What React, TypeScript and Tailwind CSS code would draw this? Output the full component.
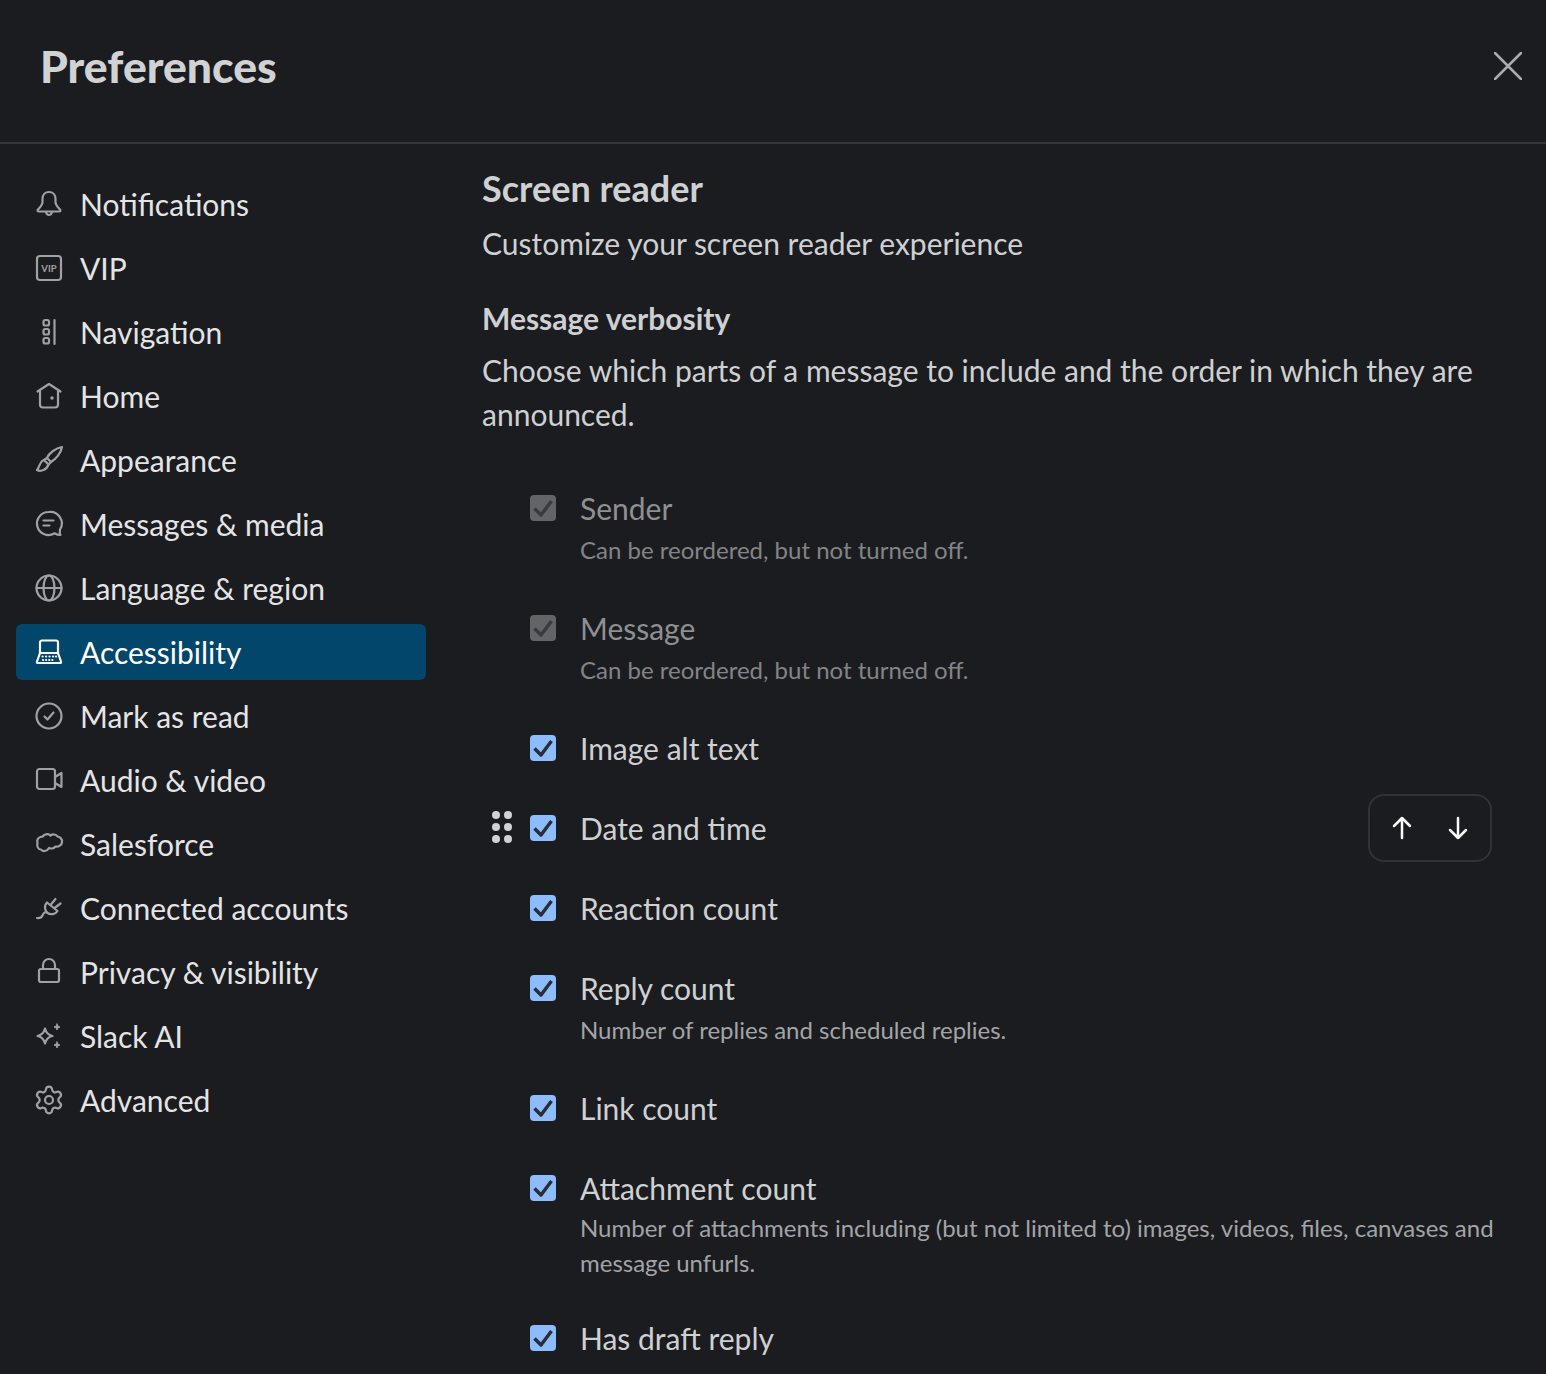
import { Settings } from "lucide-react";
import type { ReactNode } from "react";

const Ico = ({ children }: { children: ReactNode }) => (
  <svg
    width="26"
    height="26"
    viewBox="0 0 26 26"
    fill="none"
    stroke="currentColor"
    strokeWidth="2.2"
    strokeLinecap="round"
    strokeLinejoin="round"
    className="shrink-0 overflow-visible"
  >
    {children}
  </svg>
);

const navItems: { label: string; active?: boolean; icon: ReactNode }[] = [
  {
    label: "Notifications",
    icon: (
      <Ico>
        <path d="M13 1c-4 0-6.5 3-6.5 7v3c0 3-2 5-4.5 7.5-1 1-.5 2 1 2h20c1.500 0 2-1 1-2-2.500-2.500-4.500-4.500-4.500-7.500V8c0-4-2.500-7-6.500-7z" />
        <path d="M10 21c.5 2 1.500 3 3 3s2.500-1 3-3" />
      </Ico>
    ),
  },
  {
    label: "VIP",
    icon: (
      <Ico>
        <rect x="1" y="1" width="24" height="24" rx="3" />
        <text x="13" y="16.500" textAnchor="middle" fontSize="9.500" fontWeight="700" fill="currentColor" stroke="none">
          VIP
        </text>
      </Ico>
    ),
  },
  {
    label: "Navigation",
    icon: (
      <Ico>
        <rect x="7.500" y="1" width="5.500" height="5.500" rx="1.800" />
        <rect x="7.500" y="10" width="5.500" height="5.500" rx="1.800" />
        <rect x="7.500" y="19" width="5.500" height="5.500" rx="1.800" />
        <path d="M18.500 1v24" />
      </Ico>
    ),
  },
  {
    label: "Home",
    icon: (
      <Ico>
        <path d="M1.500 8.500 13 1l11.500 7.500M4 7v14.500A3 3 0 0 0 7 24.500h12a3 3 0 0 0 3-3V7" />
        <circle cx="16" cy="15" r="1.700" fill="currentColor" stroke="none" />
      </Ico>
    ),
  },
  {
    label: "Appearance",
    icon: (
      <Ico>
        <path d="M26 0C20 1 13 6 11 11l4 4C20 12 25 6 26 0z" />
        <path d="M11 11 8 13l4.500 4.500L15 15" />
        <path d="M8 13c-4 1-4 6-7 10 4 2 9.500 0 11.500-5.500" />
      </Ico>
    ),
  },
  {
    label: "Messages & media",
    icon: (
      <Ico>
        <path d="M12.500 1a11.500 11.500 0 1 0 6 21.300c1.500.9 3.500 1.700 6 1.700-1-1.500-.9-3.500-.5-5.500A11.500 11.500 0 0 0 12.500 1z" />
        <path d="M7.500 9.500h10M7.500 14.500h6" />
      </Ico>
    ),
  },
  {
    label: "Language & region",
    icon: (
      <Ico>
        <circle cx="13" cy="13" r="12.500" />
        <ellipse cx="13" cy="13" rx="5.500" ry="12.500" />
        <path d="M.5 13h25" />
      </Ico>
    ),
  },
  {
    label: "Accessibility",
    active: true,
    icon: (
      <Ico>
        <path d="M4 14V3.500A2 2 0 0 1 6 1.500h14a2 2 0 0 1 2 2V14" />
        <path d="M4 14h18l3 8.500a1 1 0 0 1-1 1.500H2a1 1 0 0 1-1-1.500z" />
        <path d="M6.500 17.500h.1M10 17.500h.1M13.500 17.500h.1M17 17.500h.1M20 17.500h.1M7 21h12" strokeDasharray="0.1 3" />
      </Ico>
    ),
  },
  {
    label: "Mark as read",
    icon: (
      <Ico>
        <circle cx="13" cy="13" r="12.500" />
        <path d="m8.500 13.500 3 3 6-7" />
      </Ico>
    ),
  },
  {
    label: "Audio & video",
    icon: (
      <Ico>
        <rect x="1" y="2" width="18" height="20" rx="2.500" />
        <path d="m19 10 6.500-4v14L19 16" />
      </Ico>
    ),
  },
  {
    label: "Salesforce",
    icon: (
      <Ico>
        <path d="M7 5C9 2.500 13 2.500 14.500 4.500c2-1.500 5.500-1.500 7 1C24.500 6 26.500 8.500 26 11c0 3-3.500 5-6.500 4.500-1.500 2-4.500 2.500-6.500 1.500-2 3.500-6.500 4-8 1.500-3 0-4.500-3.500-3.500-6.500-1-2.500.5-5.500 3-6 1-.5 2-.5 2.500-.5z" />
      </Ico>
    ),
  },
  {
    label: "Connected accounts",
    icon: (
      <Ico>
        <path d="M1 23c3 .5 4.500-.5 5.500-2.500.5-1.500 1-2.500 2.500-3" />
        <path d="M11 7.500 21.500 16c-2 3.500-7 4-10 2s-3.500-8-.5-10.500z" />
        <path d="m14.500 10 5-6M18.500 13l6-4.500" />
      </Ico>
    ),
  },
  {
    label: "Privacy & visibility",
    icon: (
      <Ico>
        <rect x="3" y="10" width="20" height="13" rx="2" />
        <path d="M7 10V6a6 6 0 0 1 12 0v4" />
      </Ico>
    ),
  },
  {
    label: "Slack AI",
    icon: (
      <Ico>
        <path d="M9 5.500c.9 3.700 3 6.600 7.500 7.500-4.500.9-6.600 3.800-7.500 7.500-.9-3.700-3-6.600-7.500-7.500 4.500-.9 6.600-3.800 7.500-7.500z" />
        <path d="M21 1c.4 1.800 1.200 2.600 3 3-1.800.4-2.600 1.200-3 3-.4-1.800-1.200-2.600-3-3 1.800-.4 2.600-1.200 3-3zM21 19c.4 1.800 1.200 2.600 3 3-1.800.4-2.600 1.200-3 3-.4-1.800-1.200-2.600-3-3 1.800-.4 2.600-1.200 3-3z" fill="currentColor" strokeWidth="1" />
      </Ico>
    ),
  },
  {
    label: "Advanced",
    icon: <Settings size={32} strokeWidth={1.650} className="shrink-0" />,
  },
];

type Row = { label: string; desc?: string; long?: boolean; disabled?: boolean; hovered?: boolean };

const rows: Row[] = [
  { label: "Sender", desc: "Can be reordered, but not turned off.", disabled: true },
  { label: "Message", desc: "Can be reordered, but not turned off.", disabled: true },
  { label: "Image alt text" },
  { label: "Date and time", hovered: true },
  { label: "Reaction count" },
  { label: "Reply count", desc: "Number of replies and scheduled replies." },
  { label: "Link count" },
  {
    label: "Attachment count",
    long: true,
    desc: "Number of attachments including (but not limited to) images, videos, files, canvases and message unfurls.",
  },
  { label: "Has draft reply" },
];

const Check = ({ disabled }: { disabled?: boolean }) => (
  <span
    className={`block h-[26px] w-[26px] shrink-0 rounded-[4px] ${disabled ? "bg-[#636466]" : "bg-[#8cbcff]"}`}
  >
    <svg width="26" height="26" viewBox="0 0 26 26" fill="none">
      <path
        d="M4.500 13.500 11 20 21.500 6"
        stroke={disabled ? "#3a3b3e" : "#2b2d31"}
        strokeWidth="3.500"
        strokeLinejoin="round"
      />
    </svg>
  </span>
);

const Grip = () => (
  <div className="absolute left-[10px] top-[3px] grid grid-cols-2 gap-[4px]">
    {[0, 1, 2, 3, 4, 5].map((i) => (
      <span key={i} className="h-[8px] w-[8px] rounded-full bg-[#d1d2d3]" />
    ))}
  </div>
);

const App = () => {
  return (
    <div className="h-[1374px] overflow-hidden bg-[#1a1c20] font-['Lato',sans-serif] text-[#cfd0d1]">
      <header className="flex h-[144px] items-center justify-between border-b-2 border-[#35373b] pb-[10px] pl-[40px] pr-[24px]">
        <h1 className="text-[44.5px] font-black leading-none text-[#d1d2d3]">Preferences</h1>
        <svg width="28" height="28" viewBox="0 0 28 28" fill="none" stroke="#abacae" strokeWidth="2.500" strokeLinecap="round">
          <path d="M1 1l26 26M27 1 1 27" />
        </svg>
      </header>
      <div className="flex">
        <nav className="w-[482px] shrink-0 pl-[16px] pr-[56px] pt-[32px]">
          <ul className="flex flex-col gap-[8px]">
            {navItems.map((item) => (
              <li
                key={item.label}
                className={`flex h-[56px] items-center gap-[18px] rounded-[6px] pl-[20px] text-[30px] ${
                  item.active ? "bg-[#03466c] text-white" : "text-[#e4e4e5]"
                }`}
              >
                <span className={`flex w-[26px] justify-center ${item.active ? "text-white" : "text-[#a0a1a3]"}`}>
                  {item.icon}
                </span>
                {item.label}
              </li>
            ))}
          </ul>
        </nav>
        <main className="min-w-0 flex-1 pr-[48px] pt-[22px]">
          <h2 className="text-[36px] font-bold leading-[44px]">Screen reader</h2>
          <p className="mt-[11px] text-[30px] leading-[44px]">Customize your screen reader experience</p>
          <h3 className="mt-[31px] text-[30px] font-bold leading-[44px]">Message verbosity</h3>
          <p className="mt-[8px] text-[30px] leading-[44px]">
            Choose which parts of a message to include and the order in which they are announced.
          </p>
          <div className="mt-[52px]">
            {rows.map((row) => (
              <div key={row.label} className="relative flex gap-[24px] pb-[40px] pl-[48px]">
                {row.hovered && <Grip />}
                <span className="pt-[7px]">
                  <Check disabled={row.disabled} />
                </span>
                <div className={row.disabled ? "text-[#8f9092]" : ""}>
                  <div className="h-[40px] text-[30px] leading-[40px]">{row.label}</div>
                  {row.desc && (
                    <div
                      className={`text-[24px] ${row.long ? "-mb-[2px] mt-[2px] leading-[35px]" : "pt-[3px] leading-[37px]"} ${
                        row.disabled ? "text-[#838486]" : "text-[#a3a4a6]"
                      }`}
                    >
                      {row.desc}
                    </div>
                  )}
                </div>
                {row.hovered && (
                  <div className="absolute right-[6px] top-[-14px] flex h-[68px] w-[124px] items-center justify-center gap-[28px] rounded-[16px] border-2 border-[#303236] text-white">
                    <svg width="28" height="28" viewBox="0 0 28 28" fill="none" stroke="currentColor" strokeWidth="2.500" strokeLinecap="round" strokeLinejoin="round">
                      <path d="M14 24V4M6 12l8-8 8 8" />
                    </svg>
                    <svg width="28" height="28" viewBox="0 0 28 28" fill="none" stroke="currentColor" strokeWidth="2.500" strokeLinecap="round" strokeLinejoin="round">
                      <path d="M14 4v20M6 16l8 8 8-8" />
                    </svg>
                  </div>
                )}
              </div>
            ))}
          </div>
        </main>
      </div>
    </div>
  );
};

export default App;
